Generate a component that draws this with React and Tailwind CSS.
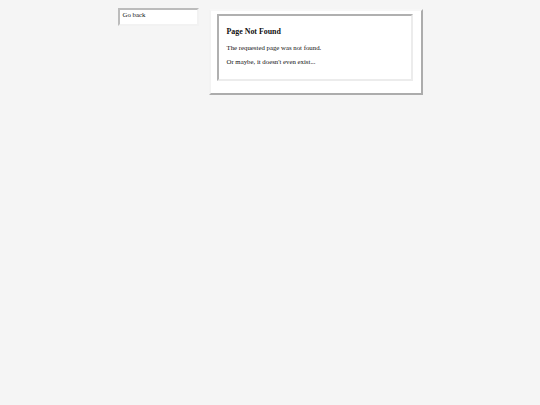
import React from 'react';

const App = () => {
    return (
        <div className="min-h-[405px] bg-[#f5f5f5] font-['Liberation_Serif',serif] text-[#111]">
            <div className="mx-auto flex w-[305px] items-start gap-[10px]">
                {/* Sidebar */}
                <div className="mt-[8px] w-[81px] border-2 border-t-[#bcbcbc] border-l-[#bcbcbc] border-r-[#f2f2f2] border-b-[#f2f2f2] bg-white px-[3px] pt-[1px] pb-[5px]">
                    <a href="#" className="block text-[6.8px] leading-[7.7px] text-[#111]">Go back</a>
                </div>

                {/* Main panel */}
                <div className="mt-[9px] w-[214px] border-2 border-t-[#f7f7f7] border-l-[#f3f3f3] border-r-[#acacac] border-b-[#acacac] bg-white pt-[3px] pl-[6px] pr-[8px] pb-[12px]">
                    <div className="border-2 border-t-[#b0b0b0] border-l-[#b0b0b0] border-r-[#ececec] border-b-[#ececec] pt-[11px] pb-[13px] pl-[8px]">
                        <h3 className="text-[7.9px] font-bold leading-[9px]">Page Not Found</h3>
                        <p className="mt-[8px] text-[6.8px] leading-[7.7px]">The requested page was not found.</p>
                        <p className="mt-[6.6px] text-[6.8px] leading-[7.7px]">Or maybe, it doesn't even exist...</p>
                    </div>
                </div>
            </div>
        </div>
    );
};

export default App;
